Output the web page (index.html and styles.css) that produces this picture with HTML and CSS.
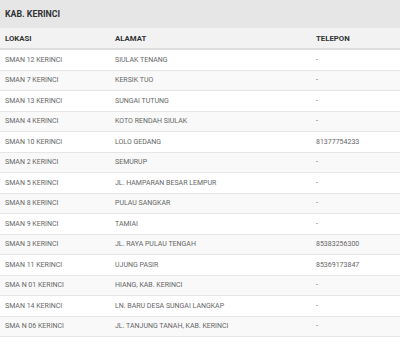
FILE: index.html
```html
<!DOCTYPE html>
<html lang="id">
<head>
    <meta charset="UTF-8">
    <title>Kab. Kerinci</title>
    <link rel="stylesheet" href="styles.css">
</head>
<body>
    <div class="region">
        <h2 class="region-title">KAB. KERINCI</h2>
        <table class="school-table">
            <thead>
                <tr>
                    <th class="col-loc">LOKASI</th>
                    <th class="col-addr">ALAMAT</th>
                    <th class="col-tel">TELEPON</th>
                </tr>
            </thead>
            <tbody>
                <tr><td>SMAN 12 KERINCI</td><td>SIULAK TENANG</td><td>-</td></tr>
                <tr><td>SMAN 7 KERINCI</td><td>KERSIK TUO</td><td>-</td></tr>
                <tr><td>SMAN 13 KERINCI</td><td>SUNGAI TUTUNG</td><td>-</td></tr>
                <tr><td>SMAN 4 KERINCI</td><td>KOTO RENDAH SIULAK</td><td>-</td></tr>
                <tr><td>SMAN 10 KERINCI</td><td>LOLO GEDANG</td><td>81377754233</td></tr>
                <tr><td>SMAN 2 KERINCI</td><td>SEMURUP</td><td>-</td></tr>
                <tr><td>SMAN 5 KERINCI</td><td>JL. HAMPARAN BESAR LEMPUR</td><td>-</td></tr>
                <tr><td>SMAN 8 KERINCI</td><td>PULAU SANGKAR</td><td>-</td></tr>
                <tr><td>SMAN 9 KERINCI</td><td>TAMIAI</td><td>-</td></tr>
                <tr><td>SMAN 3 KERINCI</td><td>JL. RAYA PULAU TENGAH</td><td>85383256300</td></tr>
                <tr><td>SMAN 11 KERINCI</td><td>UJUNG PASIR</td><td>85369173847</td></tr>
                <tr><td>SMA N 01 KERINCI</td><td>HIANG, KAB. KERINCI</td><td>-</td></tr>
                <tr><td>SMAN 14 KERINCI</td><td>LN. BARU DESA SUNGAI LANGKAP</td><td>-</td></tr>
                <tr><td>SMA N 06 KERINCI</td><td>JL. TANJUNG TANAH, KAB. KERINCI</td><td>-</td></tr>
            </tbody>
        </table>
    </div>
</body>
</html>
```

FILE: styles.css
```css
body {
    margin: 0;
    background: #fff;
    font-family: Roboto, "Liberation Sans", sans-serif;
}

.region-title {
    margin: 0;
    height: 28px;
    line-height: 28px;
    padding: 0 5px;
    background: #e6e6e6;
    color: #333;
    font-size: 8.8px;
    font-weight: 700;
}

.school-table {
    width: 100%;
    border-collapse: collapse;
    table-layout: fixed;
}

.school-table th {
    height: 20px;
    padding: 0 5px;
    background: #f2f2f2;
    border-bottom: 2px solid #dedede;
    color: #333;
    font-size: 7.8px;
    font-weight: 700;
    text-align: left;
}

.school-table .col-loc { width: 100px; }
.school-table .col-addr { width: 191px; }

.school-table td {
    height: 19.5px;
    padding: 0 5px;
    border-bottom: 1px solid #e6e6e6;
    color: #666;
    font-size: 7px;
    white-space: nowrap;
}

.school-table tbody tr:nth-child(even) td {
    background: #f9f9f9;
}
```
